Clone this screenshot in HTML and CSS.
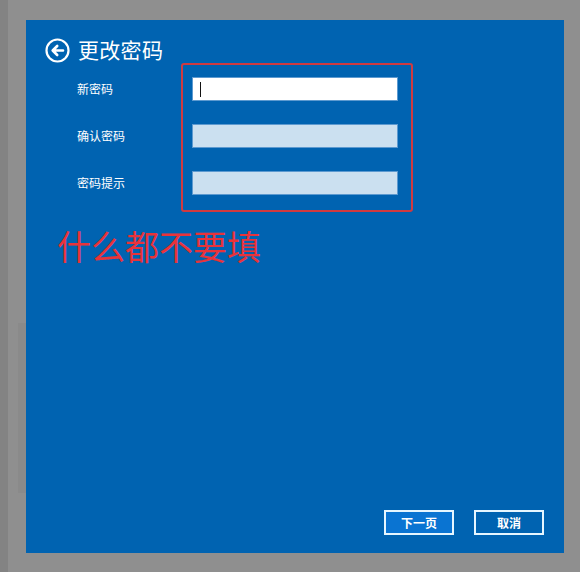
FILE: index.html
```html
<!DOCTYPE html>
<html lang="zh-CN">
<head>
    <meta charset="UTF-8">
    <title>更改密码</title>
    <link rel="stylesheet" href="styles.css">
</head>
<body>
    <div class="screen">
        <div class="edge"></div>
        <div class="gutter"><div class="shadow"></div></div>

        <div class="dialog">
            <div class="header">
                <svg class="back" width="25" height="25" viewBox="0 0 25 25">
                    <circle cx="12.5" cy="12.5" r="11" fill="none" stroke="#fff" stroke-width="2.2"/>
                    <path d="M18 12.5H8M12.2 8L7.7 12.5l4.5 4.5" fill="none" stroke="#fff" stroke-width="2.6" stroke-linecap="round" stroke-linejoin="round"/>
                </svg>
                <h1>更改密码</h1>
            </div>

            <form class="form">
                <div class="labels">
                    <label for="newpwd">新密码</label>
                    <label for="confirmpwd">确认密码</label>
                    <label for="hint">密码提示</label>
                </div>
                <div class="mark">
                    <div class="field active" id="newpwd"><span class="caret"></span></div>
                    <div class="field" id="confirmpwd"></div>
                    <div class="field" id="hint"></div>
                </div>
            </form>

            <p class="note">什么都不要填</p>

            <div class="buttons">
                <button type="button" class="primary">下一页</button>
                <button type="button">取消</button>
            </div>
        </div>
    </div>
</body>
</html>
```

FILE: styles.css
```css
body {
    margin: 0;
    background-color: #8f8f8f;
    font-family: "Noto Sans CJK SC", "Noto Sans", sans-serif;
    color: #fff;
}

.screen {
    display: flex;
    height: 572px;
    overflow: hidden;
}

.edge {
    width: 8px;
    background-color: #838383;
}

.gutter {
    width: 18px;
    display: flex;
    justify-content: flex-end;
}

.shadow {
    width: 8px;
    height: 170px;
    margin-top: 323px;
    background-color: #8a8a8a;
}

.dialog {
    width: 538px;
    height: 533px;
    margin-top: 20px;
    background-color: #0063b1;
    display: flex;
    flex-direction: column;
    box-sizing: border-box;
    padding: 17px 20px 18px 19px;
}

.header {
    display: flex;
    align-items: center;
    height: 25px;
}

.back {
    margin-top: 1px;
}

h1 {
    margin: 0 0 0 8px;
    font-size: 21px;
    font-weight: normal;
    line-height: 25px;
    letter-spacing: 0.3px;
}

.form {
    display: flex;
    margin-top: 1px;
}

.labels {
    display: flex;
    flex-direction: column;
    gap: 23px;
    width: 104px;
    padding: 14px 0 0 32px;
}

label {
    font-size: 12px;
    line-height: 24px;
    height: 24px;
}

.mark {
    display: flex;
    flex-direction: column;
    gap: 23px;
    padding: 12px 13px 15px 9px;
    border: 2px solid #d03a40;
    border-radius: 3px;
}

.field {
    width: 206px;
    height: 24px;
    box-sizing: border-box;
    background-color: #cbe0f0;
    border: 1px solid #5d9ad0;
}

.field.active {
    background-color: #fff;
    display: flex;
    align-items: center;
    padding-left: 7px;
}

.caret {
    width: 1px;
    height: 15px;
    background-color: #111;
}

.note {
    margin: 14px 0 0 12px;
    font-size: 34px;
    line-height: 40px;
    color: #e8333a;
}

.buttons {
    margin-top: auto;
    display: flex;
    justify-content: flex-end;
    gap: 20px;
}

button {
    width: 70px;
    height: 25px;
    background-color: #0063b1;
    border: 2px solid #e6f6ff;
    color: #fff;
    font-family: "Noto Sans CJK SC", sans-serif;
    font-size: 12px;
    font-weight: bold;
    padding: 0;
}

button.primary {
    background-color: #0a74d2;
}
```
